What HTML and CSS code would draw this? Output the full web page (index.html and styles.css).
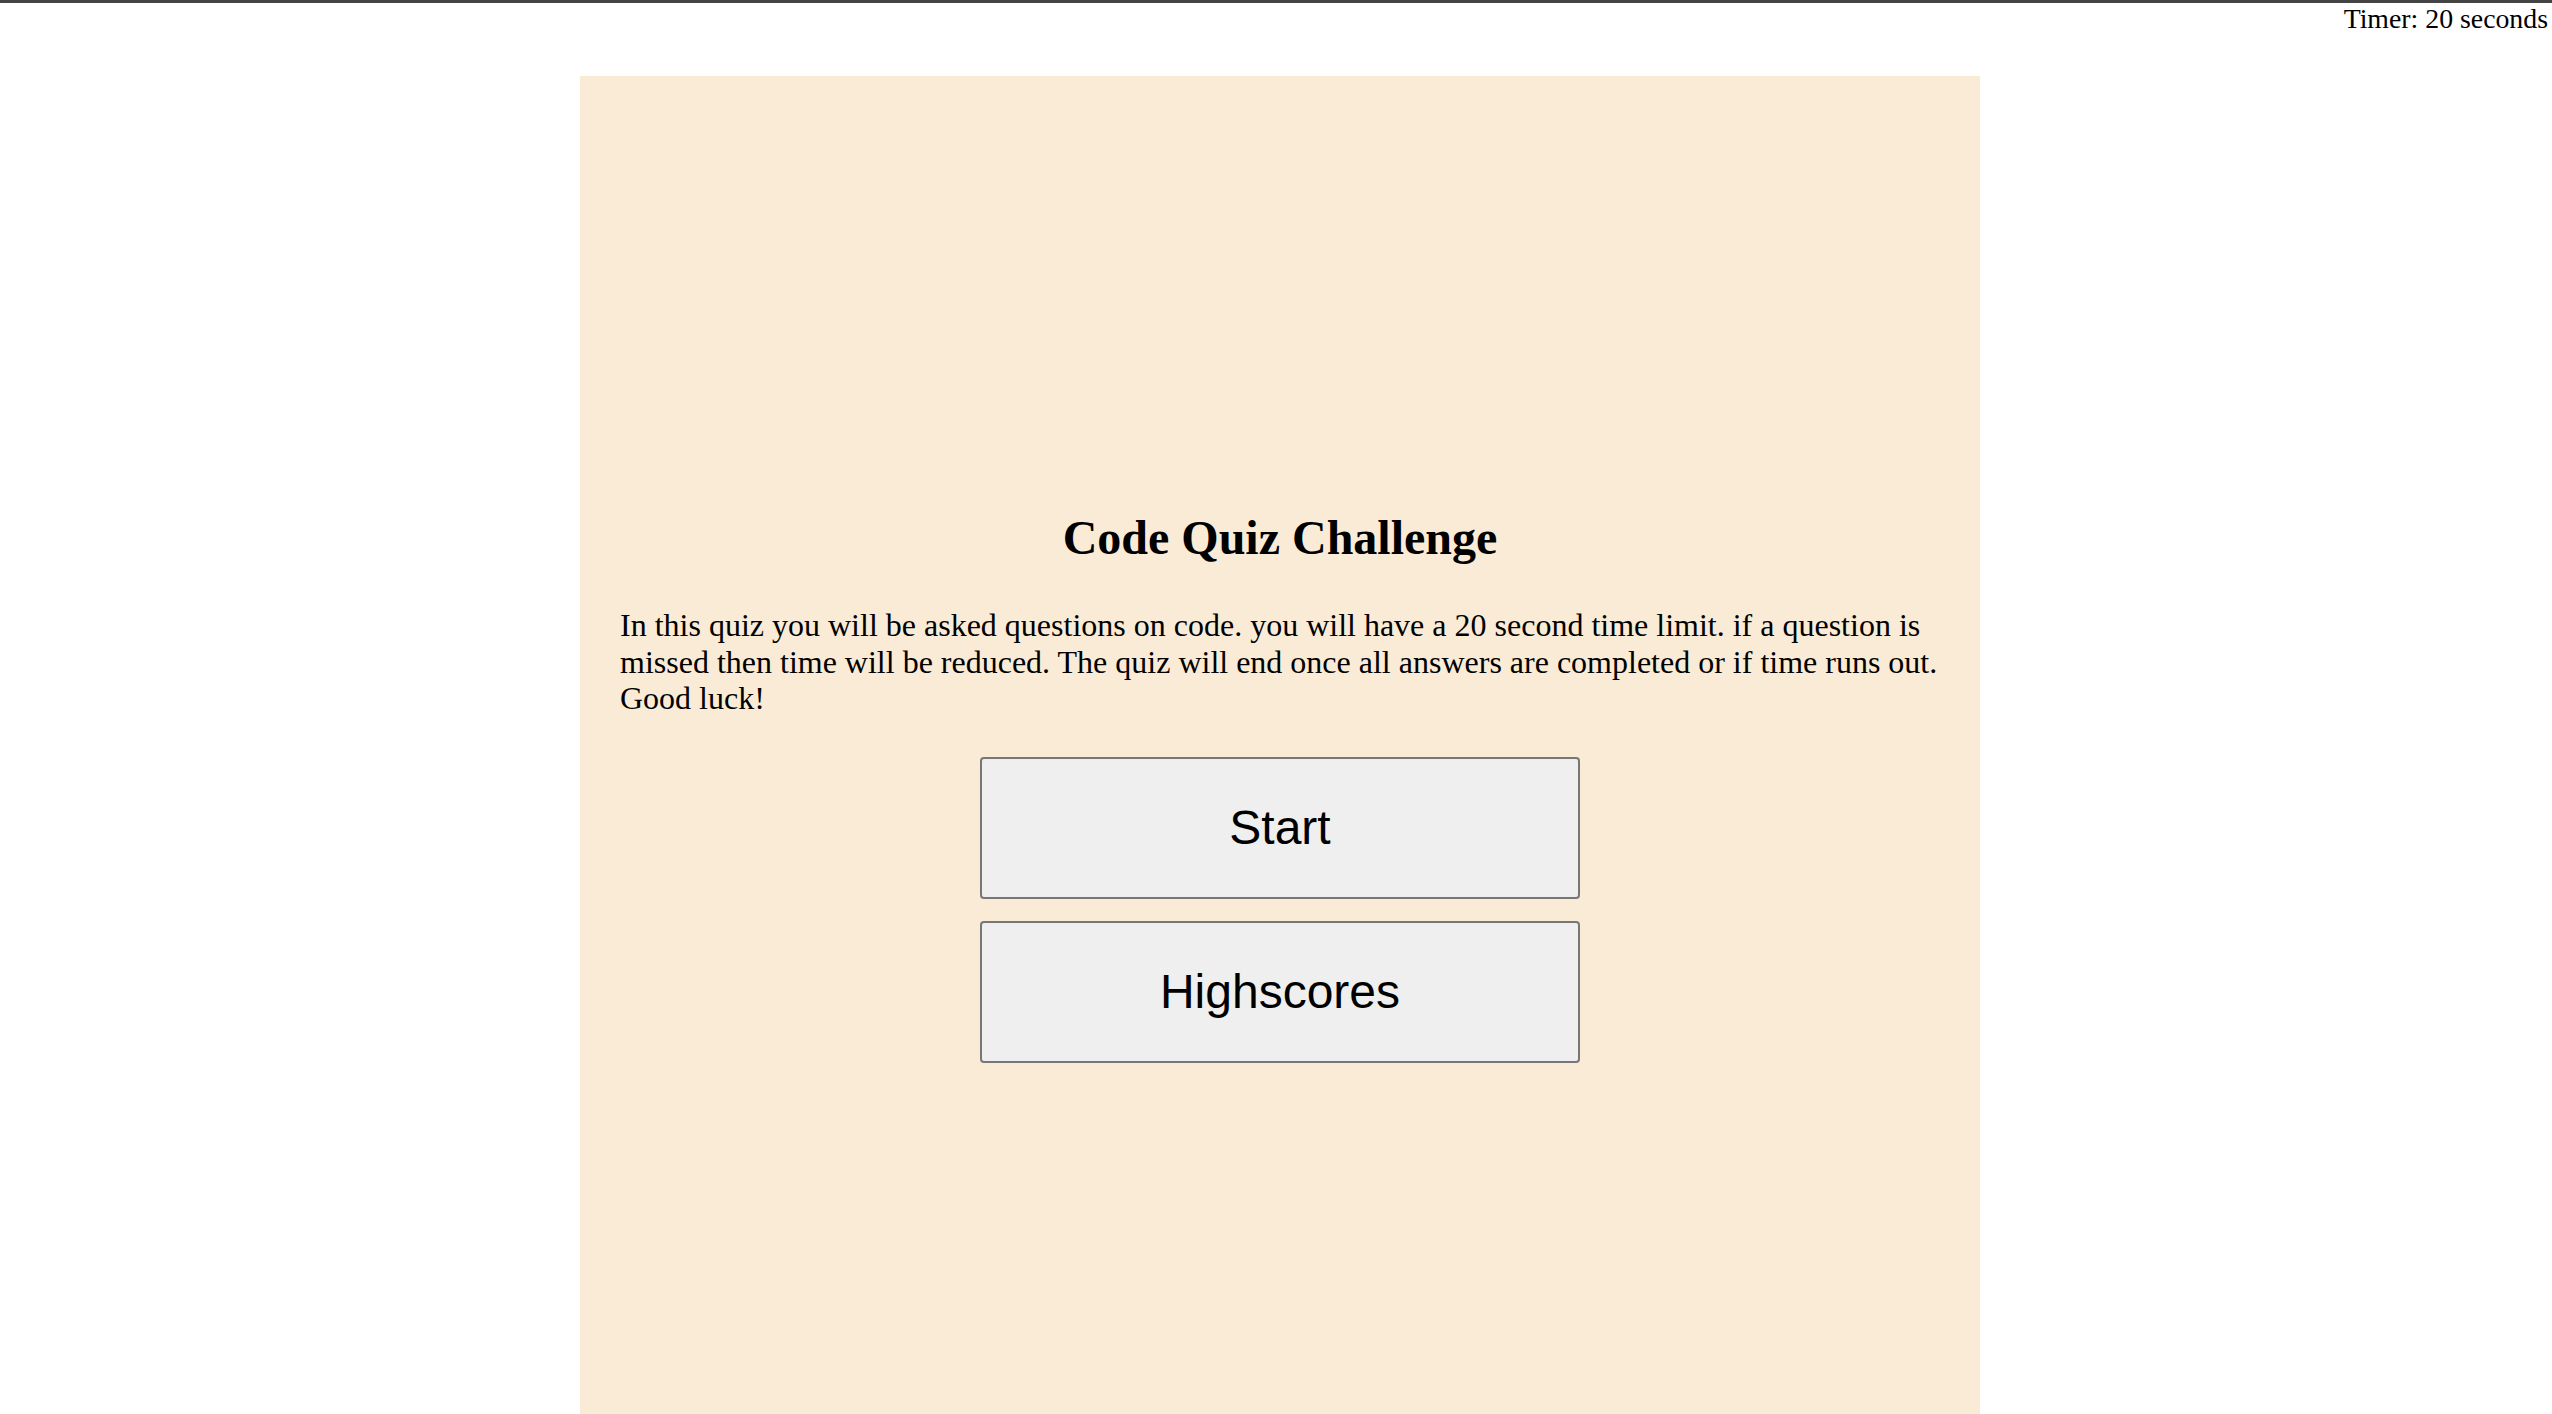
FILE: index.html
```html
<!DOCTYPE html>
<html lang="en">
<head>
<meta charset="utf-8">
<title>Code Quiz</title>
<link rel="stylesheet" href="styles.css">
</head>
<body>
<header class="topbar">
  <div class="timer">Timer: 20 seconds</div>
</header>
<div class="stage">
  <main class="panel">
    <h1 class="title">Code Quiz Challenge</h1>
    <p class="intro">In this quiz you will be asked questions on code. you will have a 20 second time limit. if a question is missed then time will be reduced. The quiz will end once all answers are completed or if time runs out. Good luck!</p>
    <div class="actions">
      <button class="btn">Start</button>
      <button class="btn">Highscores</button>
    </div>
  </main>
</div>
</body>
</html>
```
FILE: styles.css
```css
html, body {
  margin: 0;
  padding: 0;
  background: #ffffff;
}
body {
  font-family: "Liberation Serif", "Times New Roman", serif;
  color: #000;
  overflow: hidden;
}
.topbar {
  border-top: 3px solid #444444;
  height: 73px;
}
.timer {
  text-align: right;
  font-size: 27.8px;
  line-height: 32px;
  padding-right: 4px;
}
.stage {
  padding-left: 8px;
}
.panel {
  width: 1400px;
  margin: 0 auto;
  min-height: 1500px;
  background: #faebd7;
  padding: 434px 40px 0;
  box-sizing: border-box;
}
.title {
  margin: 0;
  text-align: center;
  font-size: 48px;
  line-height: 56px;
  font-weight: bold;
}
.intro {
  margin: 41px -40px 0 0;
  font-size: 32px;
  line-height: 36.6px;
}
.actions {
  margin-top: 40px;
  display: flex;
  flex-direction: column;
  align-items: center;
  gap: 22px;
}
.btn {
  width: 600px;
  height: 142px;
  background: #efefef;
  border: 2px solid #767676;
  border-radius: 4px;
  font-family: "Liberation Sans", Arial, sans-serif;
  font-size: 48px;
  color: #000;
  padding: 0;
}
```
